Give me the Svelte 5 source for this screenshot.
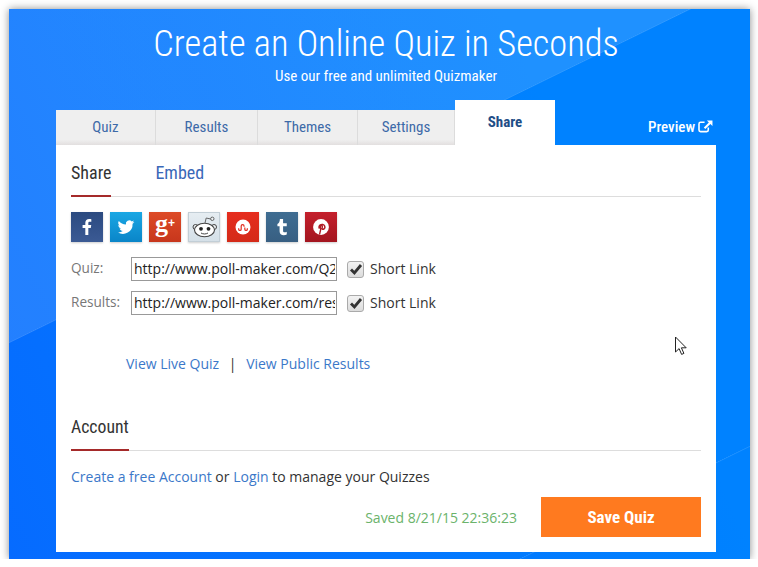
<script>
  const tabs = [
    { label: 'Quiz', w: 100 },
    { label: 'Results', w: 102 },
    { label: 'Themes', w: 100 },
    { label: 'Settings', w: 97 }
  ];
</script>

<div class="frame">
  <header class="hero">
    <h1>Create an Online Quiz in Seconds</h1>
    <p>Use our free and unlimited Quizmaker</p>
  </header>

  <div class="card">
    <nav class="tabs">
      {#each tabs as t}
        <div class="tab" style="width:{t.w}px"><span>{t.label}</span></div>
      {/each}
      <div class="tab active"><span>Share</span></div>
      <div class="preview">
        <span>Preview</span>
        <svg viewBox="0 0 16 14" width="15" height="13" aria-hidden="true">
          <path d="M11 8.2v2.6a1.7 1.7 0 0 1-1.7 1.7H2.7A1.7 1.7 0 0 1 1 10.800V4.200A1.700 1.700 0 0 1 2.700 2.500H7" fill="none" stroke="#fff" stroke-width="1.700"/>
          <path d="M9.500 0.500H15.500V6.500L13.300 4.400 7.800 9.800 6.200 8.200 11.600 2.700Z" fill="#fff"/>
        </svg>
      </div>
    </nav>

    <div class="panel">
      <div class="section-head">
        <span class="head-tab current">Share</span>
        <span class="head-tab link">Embed</span>
      </div>

      <div class="social">
        <div class="sq fb">
          <svg viewBox="-2 -2 36 34" width="32" height="30"><path d="M17.500 24V16h2.800l.5-3.300h-3.300v-2c0-1 .4-1.600 1.700-1.600h1.700V6.200c-.6-.1-1.500-.2-2.500-.2-2.600 0-4.300 1.500-4.300 4.300v2.400H11V16h3.100v8z" fill="#fff"/></svg>
        </div>
        <div class="sq tw">
          <svg viewBox="0 0 24 24" width="20" height="20"><path d="M22 5.900c-.7.300-1.500.5-2.300.6.800-.5 1.500-1.300 1.800-2.200-.8.500-1.700.8-2.600 1a4.100 4.100 0 0 0-7 3.700A11.600 11.600 0 0 1 3.400 4.700a4.100 4.100 0 0 0 1.300 5.500c-.7 0-1.300-.2-1.900-.5 0 2 1.400 3.700 3.300 4.100-.6.200-1.200.2-1.800.1.500 1.600 2 2.800 3.800 2.800A8.200 8.200 0 0 1 2 18.400a11.600 11.600 0 0 0 17.900-10.300c.8-.6 1.500-1.300 2.100-2.200z" fill="#fff"/></svg>
        </div>
        <div class="sq gp">
          <span class="g">g</span><span class="plus">+</span>
        </div>
        <div class="sq rd">
          <svg viewBox="0 0 32 30" width="32" height="30">
            <circle cx="7.500" cy="15" r="2.500" fill="#eef2f4" stroke="#444" stroke-width="1"/>
            <circle cx="26" cy="15" r="2.500" fill="#eef2f4" stroke="#444" stroke-width="1"/>
            <ellipse cx="16.500" cy="18" rx="10" ry="6.800" fill="#fff" stroke="#444" stroke-width="1.100"/>
            <circle cx="13" cy="16.800" r="1.900" fill="#222"/>
            <circle cx="20.500" cy="16.800" r="1.900" fill="#222"/>
            <path d="M13 21c2.200 1.300 4.800 1.300 7 0" fill="none" stroke="#444" stroke-width="1"/>
            <path d="M17 11l1.200-5 4.500 1" fill="none" stroke="#555" stroke-width=".9"/>
            <circle cx="24.300" cy="6.800" r="1.700" fill="#eef2f4" stroke="#555" stroke-width=".9"/>
          </svg>
        </div>
        <div class="sq su">
          <svg viewBox="-4 -4 40 38" width="32" height="30">
            <circle cx="16" cy="15" r="9.500" fill="#fff"/>
            <path d="M10.500 16.500v1.200a1.600 1.600 0 0 0 3.200 0v-4a1.800 1.800 0 0 1 3.600 0v1M18.300 15.500v2.200a1.600 1.600 0 0 0 3.200 0v-1.200" fill="none" stroke="#e02a1c" stroke-width="1.500"/>
          </svg>
        </div>
        <div class="sq tu">
          <svg viewBox="-3 -3 38 36" width="32" height="30"><path d="M13.500 5.500h3.800v5h4.400v3.700h-4.400v5.300c0 1.400.7 1.900 1.800 1.900.9 0 1.800-.3 2.600-.8v3.500c-1 .6-2.300.9-3.600.9-3 0-5-1.700-5-4.900v-5.900H10.500v-2.900c2-.7 2.800-2.600 3-5.800z" fill="#fff"/></svg>
        </div>
        <div class="sq pi">
          <svg viewBox="-3 -3 38 36" width="32" height="30">
            <circle cx="16" cy="15" r="9.500" fill="#fff"/>
            <path d="M14.300 24c.2-1.500 1.300-5.800 1.500-6.800-1-1.500-.7-3.300.3-3.800 1.400-.6 1.900 1 1.300 2.500-.5 1.300.4 2.200 1.500 1.800 1.500-.6 2-2.600 1.500-4-.8-2-3.600-2.300-5.300-1.300-1.600 1-2 3.200-.9 4.500" fill="none" stroke="#b01c26" stroke-width="1.700"/>
          </svg>
        </div>
      </div>

      <div class="url-row">
        <span class="url-label">Quiz:</span>
        <input class="url" type="text" readonly value="http://www.poll-maker.com/Q2GJ6RK" />
        <label class="short"><input type="checkbox" checked /><span class="box"><svg viewBox="0 0 14 14" width="14" height="14"><path d="M2 7.500l3.400 3.500L12 3" fill="none" stroke="#333" stroke-width="2.800"/></svg></span><span class="short-text">Short Link</span></label>
      </div>
      <div class="url-row">
        <span class="url-label">Results:</span>
        <input class="url" type="text" readonly value="http://www.poll-maker.com/results" />
        <label class="short"><input type="checkbox" checked /><span class="box"><svg viewBox="0 0 14 14" width="14" height="14"><path d="M2 7.500l3.400 3.500L12 3" fill="none" stroke="#333" stroke-width="2.800"/></svg></span><span class="short-text">Short Link</span></label>
      </div>

      <div class="views">
        <a href="#live">View Live Quiz</a>
        <span class="sep">|</span>
        <a href="#public">View Public Results</a>
      </div>

      <div class="section-head account">
        <span class="head-tab current">Account</span>
      </div>

      <p class="manage"><a href="#create">Create a free Account</a> or <a href="#login">Login</a> to manage your Quizzes</p>

      <div class="save-row">
        <span class="saved">Saved 8/21/15 22:36:23</span>
        <button class="save">Save Quiz</button>
      </div>
    </div>
  </div>

  <svg class="cursor" viewBox="0 0 14 20" width="14" height="20" aria-hidden="true">
    <path d="M1.500 1v15l3.600-3.400 2.500 5.800 2.300-1-2.500-5.600h4.800z" fill="#fff" stroke="#222" stroke-width="1"/>
  </svg>
</div>

<style>
  :global(body) {
    margin: 0;
    background: #fff;
  }
  .frame {
    position: relative;
    width: 741px;
    height: 550px;
    margin: 9px 0 0 9px;
    box-sizing: border-box;
    padding-left: 47px;
    background:
      linear-gradient(153.9deg, rgba(255, 255, 255, .12) 299px, rgba(255, 255, 255, .2) 299.5px, transparent 300.5px, transparent 718px, rgba(255, 255, 255, .14) 718.5px, transparent 719.5px),
      linear-gradient(65deg, #066bff, #0082ff 75%);
    box-shadow: 0 0 8px rgba(0, 0, 0, .45);
    font-family: "Open Sans", sans-serif;
    overflow: hidden;
  }
  .hero {
    width: 660px;
    height: 91px;
    text-align: center;
    color: #fff;
  }
  h1 {
    margin: 0;
    padding-top: 13px;
    font: 300 36.400px/44px "Roboto", sans-serif;
    font-stretch: 75%;
  }
  .hero p {
    margin: 1px 0 0;
    font: 400 15px/19px "Roboto", sans-serif;
    font-stretch: 75%;
  }
  .card {
    width: 660px;
  }
  .tabs {
    display: flex;
    align-items: flex-end;
    height: 45px;
    font-family: "Roboto", sans-serif;
    font-stretch: 75%;
  }
  .tab {
    box-sizing: border-box;
    height: 35px;
    padding-bottom: 2px;
    display: flex;
    align-items: center;
    justify-content: center;
    background: linear-gradient(#efefef 85%, #e2dfdf);
    border-right: 1px solid #dcdcdc;
    color: #3d6aa8;
    font-size: 15px;
  }
  .tab.active {
    width: 100px;
    height: 45px;
    background: #fff;
    border: 0;
    color: #1f4e86;
    font-weight: 700;
    font-size: 15px;
    align-items: flex-start;
    padding-top: 13px;
  }
  .preview {
    flex: 1;
    height: 35px;
    padding-bottom: 2px;
    box-sizing: border-box;
    display: flex;
    align-items: center;
    justify-content: flex-end;
    gap: 3px;
    padding-right: 3px;
    color: #fff;
    font-size: 15px;
    font-weight: 500;
  }
  .panel {
    height: 407px;
    box-sizing: border-box;
    padding: 0 15px;
    background: #fff;
  }
  .section-head {
    display: flex;
    gap: 44px;
    height: 52px;
    box-sizing: border-box;
    border-bottom: 1px solid #ddd;
    font: 400 18px/55px "Roboto", sans-serif;
    font-stretch: 75%;
  }
  .head-tab {
    height: 52px;
    box-sizing: border-box;
  }
  .head-tab.current {
    color: #333;
    border-bottom: 2px solid #a52a2a;
  }
  .head-tab.link {
    color: #3a68b8;
  }
  .social {
    display: flex;
    gap: 7px;
    margin-top: 15px;
  }
  .sq {
    box-sizing: border-box;
    position: relative;
    width: 32px;
    height: 30px;
    display: flex;
    align-items: center;
    justify-content: center;
    box-shadow: 0 1px 2px rgba(0, 0, 0, .2);
  }
  .rd svg {
    flex: none;
    margin: -1px;
  }
  .fb { background: linear-gradient(#2b4a80, #3b5a94); }
  .tw { background: linear-gradient(#1aa7e4, #0a85c8); }
  .gp { background: linear-gradient(#dd4b27, #c7361c); color: #fff; }
  .rd { background: linear-gradient(#e6edf2, #d5e0e8); border: 1px solid #c2ced6; }
  .su { background: linear-gradient(#e62d1e, #d42a18); }
  .tu { background: linear-gradient(#3f6d92, #385f82); }
  .pi { background: linear-gradient(#c4202c, #a3151f); }
  .g {
    font: 700 26px/26px "Liberation Serif", serif;
    margin-top: -7px;
  }
  .plus {
    font: 700 12px/12px "Liberation Sans", sans-serif;
    margin-top: -8px;
  }
  .url-row {
    display: flex;
    align-items: center;
    margin-top: 15px;
    height: 24px;
    font-size: 14px;
    color: #333;
  }
  .url-row + .url-row {
    margin-top: 10px;
  }
  .url-label {
    width: 60px;
    color: #777;
    font-size: 13.600px;
    margin-top: -3px;
  }
  .url {
    box-sizing: border-box;
    width: 206px;
    height: 24px;
    padding: 0 1px 2px 2px;
    border: 1px solid #999;
    border-radius: 0;
    font: 14px "Open Sans", sans-serif;
    color: #222;
    background: #fff;
    outline: 0;
  }
  .short {
    display: flex;
    align-items: center;
    gap: 6px;
    margin-left: 10px;
    font-size: 14px;
    color: #333;
  }
  .short-text {
    margin-top: -1px;
  }
  .short input {
    display: none;
  }
  .box {
    box-sizing: border-box;
    width: 17px;
    height: 17px;
    display: flex;
    align-items: center;
    justify-content: center;
    border: 1px solid #aaa;
    border-radius: 3px;
    background: linear-gradient(#f2f2f2, #dcdcdc);
  }
  .views {
    margin: 39px 0 0 55px;
    font-size: 14px;
    line-height: 20px;
    color: #333;
  }
  .sep {
    margin: 0 6px;
  }
  a {
    color: #3b78c9;
    text-decoration: none;
  }
  .account {
    margin-top: 34px;
    height: 43px;
    font-size: 17.700px;
    line-height: 38px;
  }
  .account .head-tab {
    height: 43px;
  }
  .manage {
    margin: 16px 0 0;
    font-size: 14px;
    line-height: 20px;
    color: #333;
  }
  .save-row {
    display: flex;
    align-items: center;
    justify-content: flex-end;
    gap: 24px;
    margin-top: 10px;
  }
  .saved {
    color: #6bb36b;
    font-size: 14px;
  }
  .save {
    width: 160px;
    height: 40px;
    border: 0;
    background: #ff7a1f;
    color: #fff;
    font: 700 17px "Roboto", sans-serif;
    font-stretch: 75%;
  }
  .cursor {
    position: absolute;
    left: 665px;
    top: 327px;
  }
</style>
